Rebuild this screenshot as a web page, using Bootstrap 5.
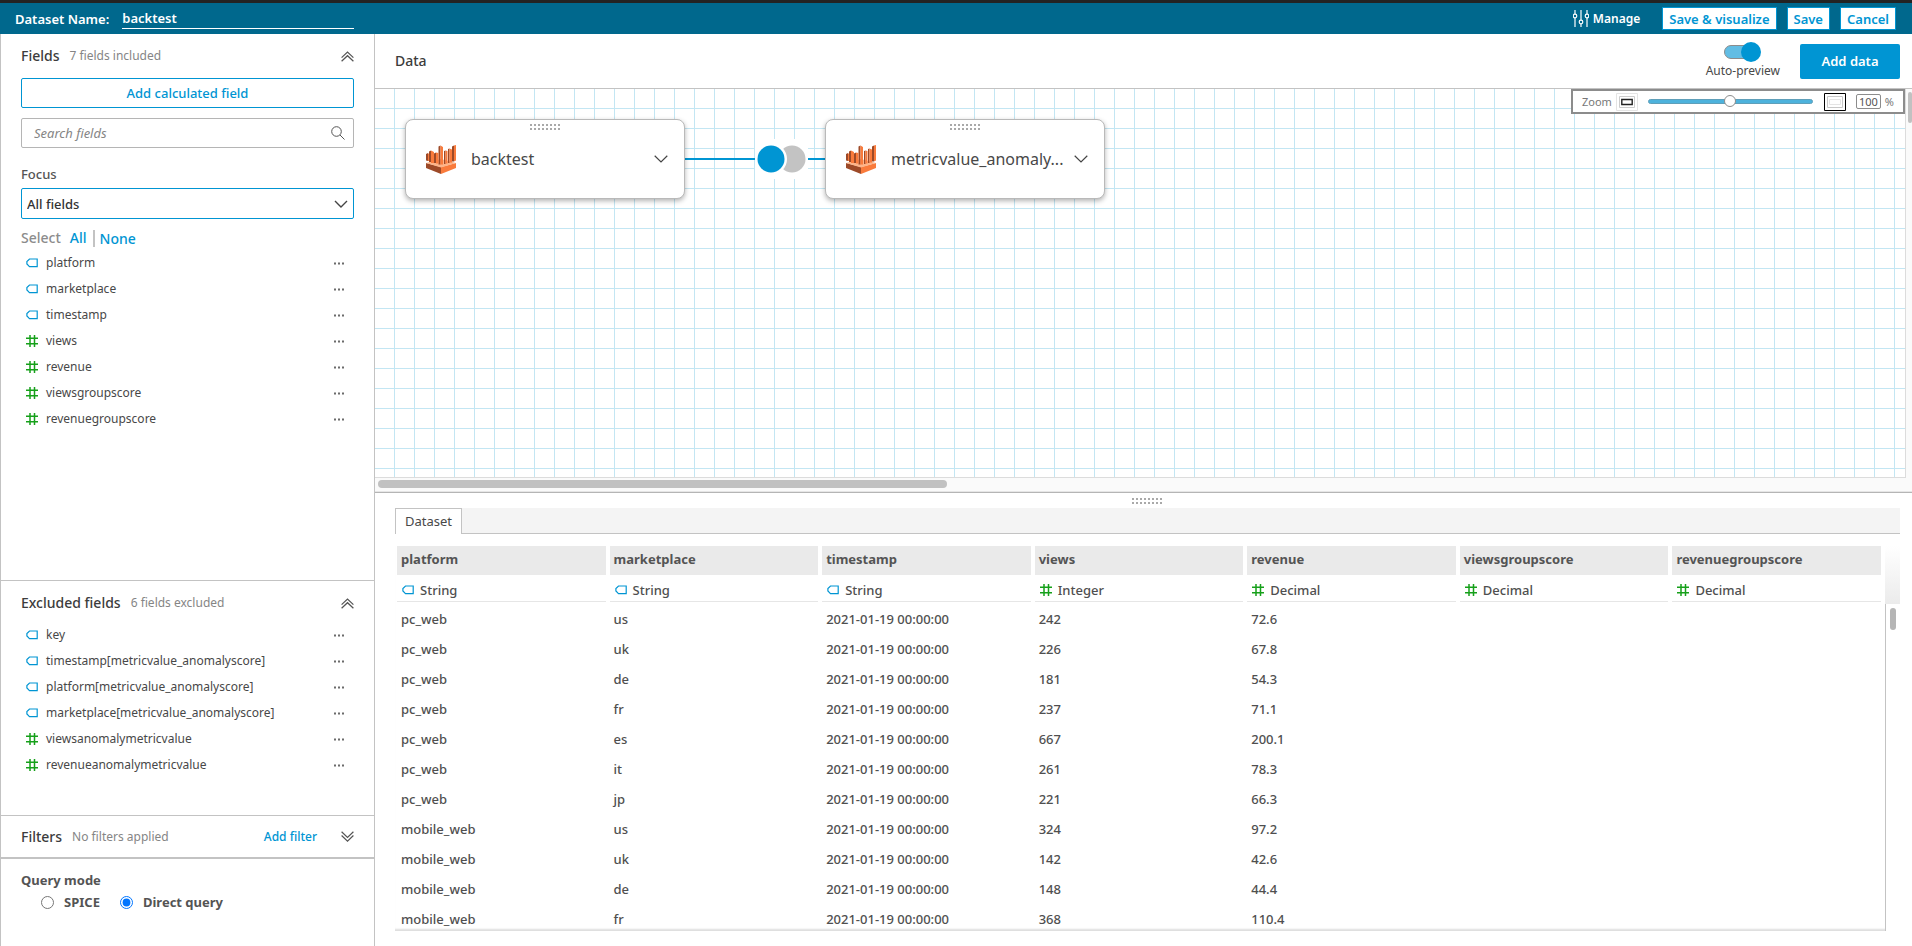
<!DOCTYPE html>
<html lang="en">
<head>
<meta charset="utf-8">
<meta name="viewport" content="width=device-width, initial-scale=1">
<title>Dataset: backtest</title>
<link href="https://cdn.jsdelivr.net/npm/bootstrap@5.3.0/dist/css/bootstrap.min.css" rel="stylesheet">
<style>
:root{--ink:#545454;--dark:#3c3c3c;--muted:#8c8c8c;--blue:#0095d3;--line:#c3c3c3}
body{font-family:"Noto Sans","Open Sans",sans-serif;font-size:13px;line-height:20px;color:var(--ink);font-weight:500}
button,input,select{font-family:inherit}
a{color:var(--blue);text-decoration:none}
svg{display:block;flex:none}
.plain{border:0;background:none;padding:0;color:inherit}
.topbar{background:#00688d;border-top:3px solid #232323;height:34px;color:#fff;font-weight:600;padding:0 16px 0 15px}
.name-input{width:232px;margin-left:13px;border:0;border-bottom:1px solid #fff;background:none;color:#fff;font-weight:600;line-height:20px;padding:0;outline:0}
.manage{font-size:12px;font-weight:600}
.btn-top{background:#fff;color:var(--blue);border:1px solid var(--blue);border-radius:0;font-size:13px;font-weight:600;line-height:20px;padding:0 6px;height:23px;margin-left:10px}
.btn-first{margin-left:22px}
.side{width:375px;border:solid var(--line);border-width:0 1px}
.pad{padding-left:20px;padding-right:20px}
.side-title{font-size:14px;color:var(--dark);font-weight:500;margin:0;line-height:20px}
.note{font-size:12px;font-weight:400;color:#858585;margin-left:10px}
.outline-btn{height:30px;border:1px solid var(--blue);border-radius:2px;color:var(--blue);font-size:13px;font-weight:500;padding:0;line-height:20px}
.search-box{height:30px;border:1px solid #b5b5b5;border-radius:2px;padding:0 8px 0 12px;margin:10px 0 16px}
.search-box input{border:0;outline:0;font-size:13px;padding:0;min-width:0}
.search-box input::placeholder{color:#858585;font-style:italic;opacity:1}
.focus-select{height:31px;border:1px solid var(--blue);border-radius:2px;color:#333;font-size:13px;font-weight:500;line-height:20px;padding:0 30px 0 5px;background-position:right 5px center;background-size:14px 14px;background-image:url("data:image/svg+xml,%3Csvg xmlns='http://www.w3.org/2000/svg' viewBox='0 0 14 14'%3E%3Cpath d='M1 4l6 6 6-6' fill='none' stroke='%23444' stroke-width='1.4'/%3E%3C/svg%3E")}
.select-row{font-size:14px;margin:9px 0 2px}
.select-row span{color:var(--muted);margin-right:9px}
.select-row a+a{border-left:2px solid var(--line);padding-left:5px;margin-left:6px;line-height:17px}
.field-list{list-style:none;margin:0;padding:0 10px 0 5px;font-size:12px;font-weight:400;color:#484848}
.field-list li{display:flex;align-items:center;height:26px}
.field-list svg{margin-right:8px}
.field-list button{margin-left:auto}
.field-list button svg{margin:0}
.rule{border-top:1px solid var(--line)}
.excluded{padding-bottom:37px}
.excluded .field-list{padding-top:1px}
.filters{height:42px}
.add-filter{font-size:12px}
.query{border-top:2px solid var(--line);height:89px;font-weight:700}
.query input{width:13px;height:13px;margin:0 10px 0 0}
.side-legend{font-size:13px;line-height:20px;font-weight:700;margin:3px 0 2px;padding:0}
.radios{padding-left:20px;font-size:13px}
.radios label{margin-right:20px}
.data-head{height:55px;border-bottom:1px solid var(--line);padding:0 12px 0 20px}
.preview{margin-right:20px;font-size:12px;font-weight:400;line-height:18px;color:#484848}
.switch-x{appearance:none;width:37px;height:20px;margin:0;position:relative}
.switch-x::before{content:"";position:absolute;left:0;top:3px;width:34px;height:14px;border:1px solid #8c8c8c;border-radius:7px;background:#62bde4}
.switch-x::after{content:"";position:absolute;right:0;top:0;width:20px;height:20px;border-radius:50%;background:var(--blue)}
.add-data{width:100px;height:35px;background:var(--blue);color:#fff;border:0;border-radius:2px;font-size:13px;font-weight:600;padding:0}
.flow-area{flex:403 1 0;min-height:0;border-bottom:1px solid #b5b5b5;background:#fafafa}
.flow-canvas{background:#fff linear-gradient(90deg,transparent 19px,#c3e6f3 19px) 0 0/20px 20px;position:relative;overflow:hidden;border:solid #dcdcdc;border-width:0 1px 1px 0}
.flow-canvas::before{content:"";position:absolute;inset:0;background:linear-gradient(transparent 19px,#c3e6f3 19px) 0 0/20px 20px}
.vbar{width:6px}
.hbar{height:14px;border-bottom:1px solid #e6e6e6}
.thumb{background:#c1c1c1;border-radius:6px}
.vbar .thumb{width:4px;height:31px;margin:3px 0 0 2px}
.hbar .thumb{width:37%;height:8px;margin-left:3px}
.node-box{position:absolute;top:30px;width:280px;height:80px;background:#fff;border:1px solid #b9b9b9;border-radius:8px;box-shadow:0 2px 5px rgba(0,0,0,.3);padding:0 16px 0 20px;font-size:16px;font-weight:400;color:#484848}
.node-box>span+svg+span{margin-left:15px}
.node-a{left:30px}
.node-b{left:450px}
.dots{width:31px;height:7px;background:linear-gradient(90deg,#a9a9a9 2px,transparent 2px) 0 0/4px 2px repeat-x,linear-gradient(90deg,#a9a9a9 2px,transparent 2px) 0 4px/4px 2px repeat-x}
.node-box .dots{position:absolute;left:124px;top:4px}
.join-link{position:absolute;left:310px;top:50px}
.zoom-box{position:absolute;top:0;right:0;width:334px;height:25px;border:2px solid #8c8c8c;background:#fff;padding:0 9px;font-size:11px;font-weight:400;color:#777}
.zoom-box label{margin-right:4px}
.zoom-box input[type=range]{appearance:none;width:168px;height:14px;margin:0 11px 0 10px;background:none;outline:0}
.zoom-box input[type=range]::-webkit-slider-runnable-track{height:5px;border:1px solid #5f9fb9;border-radius:3px;background:#4db2dc}
.zoom-box input[type=range]::-webkit-slider-thumb{appearance:none;width:12px;height:12px;margin-top:-5px;border:1px solid #8c8c8c;border-radius:50%;background:#fff}
.pct{width:25px;height:15px;border:1px solid #8c8c8c;border-radius:2px;padding:0;text-align:center;font-size:11px;color:#545454;margin:0 4px 0 10px}
.result{flex:434 1 0;min-height:0;padding:5px 12px 15px 20px}
.tab-strip{height:26px;background:#f4f4f4;border-bottom:1px solid var(--line);margin-top:3px}
.tab-strip button{height:26px;border:1px solid var(--line);border-bottom:0;background:#fff;padding:0 9px;color:#484848}
.grid-wrap{margin-top:12px;box-shadow:inset 0 -3px 2px -1px #dedede}
.grid-pane{padding-right:2px}
.data-grid{width:100%;table-layout:fixed;border-collapse:separate;border-spacing:0;color:#4f4f4f}
.data-grid th,.data-grid td{padding:0 4px;border:solid transparent;border-width:0 2px;height:30px;line-height:20px;background-clip:padding-box}
.data-grid th{height:29px;background-color:#eaeaea;color:#545454;font-weight:700;padding-bottom:2px}
.data-grid .types td{height:29px;padding:2px 4px 0 5px;background:linear-gradient(#e6e6e6,#e6e6e6) left 26px/100% 1px no-repeat padding-box}
.types span{display:flex;align-items:center;gap:6px}
.gutter{width:15px}
.gutter .fade-x{height:58px;background:linear-gradient(#fff,#ebebeb)}
.gutter .rail{border-left:1px solid var(--line)}
.gutter .thumb{width:6px;height:22px;margin:4px 0 0 4px;background:#b5b5b5}
</style>
</head>
<body class="vh-100 d-flex flex-column overflow-hidden bg-white">
<svg width="0" height="0" class="position-absolute" aria-hidden="true">
  <symbol id="tag" viewBox="0 0 12 10"><path d="M3.5 1H11.2V8.6H3.5L.9 6V3.6Z" fill="none" stroke="#0095d3" stroke-width="1.2"/></symbol>
  <symbol id="hash" viewBox="0 0 12 12"><path d="M4 0V12M8.5 0V12M0 3.3H12M0 8.7H12" fill="none" stroke="#16a01a" stroke-width="1.5"/></symbol>
  <symbol id="more" viewBox="0 0 10 3"><path d="M0 .5h2v2H0zM4 .5h2v2H4zM8 .5h2v2H8z" fill="#6b6b6b"/></symbol>
  <symbol id="up2" viewBox="0 0 13 11"><path d="M.6 6.6 6.5 1l5.9 5.6M.6 10.3 6.5 4.7l5.9 5.6" fill="none" stroke="#545454" stroke-width="1.2"/></symbol>
  <symbol id="down" viewBox="0 0 14 8"><path d="M.7.8 7 7 13.3.8" fill="none" stroke="#444" stroke-width="1.2"/></symbol>
  <symbol id="bars" viewBox="0 0 30 29">
    <path d="M0 18 15 22V29L0 23Z" fill="#9d4a28"/><path d="M15 22 30 18V23L15 29Z" fill="#f97b3c"/><path d="M0 18 15 14 30 18 15 22.500Z" fill="#fcb489"/>
    <path d="M0 9 2 8V16L0 15.500ZM3 6.500 5 5.500V17H3ZM8 8.500 10 7.500V18H8ZM12.500 1.500 14.500.5V19.500H12.500ZM18 6 19.500 5.500V19H18ZM22 4 23.500 3.500V18H22ZM26 1.500 28 .5V16.500H26Z" fill="#9d4a28"/>
    <path d="M2 8 3 9V16H2ZM5 5.500 8 7V18H5ZM10 7.500 12.500 8V18.500H10ZM14.500.5 17 2V19.500H14.500ZM19.500 5.500 21.500 6V18.500H19.500ZM23.500 3.500 26 4.500V17.500H23.500ZM28 .5 30 0V15.500L28 16.500Z" fill="#f97b3c"/>
  </symbol>
</svg>

<header class="topbar d-flex align-items-center flex-shrink-0">
  <label for="dsname">Dataset Name:</label>
  <input id="dsname" class="name-input" value="backtest">
  <button class="plain manage d-flex align-items-center ms-auto" type="button">
    <svg width="16" height="18" viewBox="0 0 16 18" class="me-1" fill="none" stroke="#fff" stroke-width="1.2"><path d="M2 0V4M2 8V17M8 0V10M8 14V17M14 0V4M14 8V17"/><circle cx="2" cy="6" r="1.800"/><circle cx="8" cy="12" r="1.800"/><circle cx="14" cy="6" r="1.800"/></svg>Manage</button>
  <button class="btn-top btn-first" type="button">Save &amp; visualize</button>
  <button class="btn-top" type="button">Save</button>
  <button class="btn-top" type="button">Cancel</button>
</header>

<div class="d-flex flex-grow-1 overflow-hidden">
  <aside class="side d-flex flex-column flex-shrink-0">
    <section class="pad flex-grow-1 overflow-hidden">
      <div class="d-flex align-items-center pt-2 mt-1 mb-2">
        <h2 class="side-title">Fields</h2><span class="note">7 fields included</span>
        <button class="plain ms-auto" type="button" aria-label="Collapse fields"><svg width="13" height="11"><use href="#up2"/></svg></button>
      </div>
      <button class="btn outline-btn w-100 mt-1" type="button">Add calculated field</button>
      <div class="search-box d-flex align-items-center">
        <input class="flex-grow-1" type="search" placeholder="Search fields" aria-label="Search fields">
        <svg width="14" height="14" viewBox="0 0 14 14" fill="none" stroke="#545454"><circle cx="5.500" cy="5.500" r="4.800"/><path d="M9 9l4.500 4.500"/></svg>
      </div>
      <label for="focus" class="d-block mb-1">Focus</label>
      <select id="focus" class="form-select focus-select"><option>All fields</option></select>
      <div class="select-row d-flex align-items-center"><span>Select</span><a href="#all">All</a><a href="#none">None</a></div>
      <ul class="field-list">
        <li><svg width="12" height="10"><use href="#tag"/></svg>platform<button class="plain" type="button" aria-label="Options"><svg width="10" height="3"><use href="#more"/></svg></button></li>
        <li><svg width="12" height="10"><use href="#tag"/></svg>marketplace<button class="plain" type="button" aria-label="Options"><svg width="10" height="3"><use href="#more"/></svg></button></li>
        <li><svg width="12" height="10"><use href="#tag"/></svg>timestamp<button class="plain" type="button" aria-label="Options"><svg width="10" height="3"><use href="#more"/></svg></button></li>
        <li><svg width="12" height="12"><use href="#hash"/></svg>views<button class="plain" type="button" aria-label="Options"><svg width="10" height="3"><use href="#more"/></svg></button></li>
        <li><svg width="12" height="12"><use href="#hash"/></svg>revenue<button class="plain" type="button" aria-label="Options"><svg width="10" height="3"><use href="#more"/></svg></button></li>
        <li><svg width="12" height="12"><use href="#hash"/></svg>viewsgroupscore<button class="plain" type="button" aria-label="Options"><svg width="10" height="3"><use href="#more"/></svg></button></li>
        <li><svg width="12" height="12"><use href="#hash"/></svg>revenuegroupscore<button class="plain" type="button" aria-label="Options"><svg width="10" height="3"><use href="#more"/></svg></button></li>
      </ul>
    </section>
    <section class="pad rule excluded">
      <div class="d-flex align-items-center pt-2 mt-1 mb-2">
        <h2 class="side-title">Excluded fields</h2><span class="note">6 fields excluded</span>
        <button class="plain ms-auto" type="button" aria-label="Collapse excluded fields"><svg width="13" height="11"><use href="#up2"/></svg></button>
      </div>
      <ul class="field-list">
        <li><svg width="12" height="10"><use href="#tag"/></svg>key<button class="plain" type="button" aria-label="Options"><svg width="10" height="3"><use href="#more"/></svg></button></li>
        <li><svg width="12" height="10"><use href="#tag"/></svg>timestamp[metricvalue_anomalyscore]<button class="plain" type="button" aria-label="Options"><svg width="10" height="3"><use href="#more"/></svg></button></li>
        <li><svg width="12" height="10"><use href="#tag"/></svg>platform[metricvalue_anomalyscore]<button class="plain" type="button" aria-label="Options"><svg width="10" height="3"><use href="#more"/></svg></button></li>
        <li><svg width="12" height="10"><use href="#tag"/></svg>marketplace[metricvalue_anomalyscore]<button class="plain" type="button" aria-label="Options"><svg width="10" height="3"><use href="#more"/></svg></button></li>
        <li><svg width="12" height="12"><use href="#hash"/></svg>viewsanomalymetricvalue<button class="plain" type="button" aria-label="Options"><svg width="10" height="3"><use href="#more"/></svg></button></li>
        <li><svg width="12" height="12"><use href="#hash"/></svg>revenueanomalymetricvalue<button class="plain" type="button" aria-label="Options"><svg width="10" height="3"><use href="#more"/></svg></button></li>
      </ul>
    </section>
    <section class="pad rule d-flex align-items-center filters">
      <h2 class="side-title">Filters</h2><span class="note">No filters applied</span>
      <a href="#filter" class="ms-auto add-filter">Add filter</a>
      <button class="plain ms-4" type="button" aria-label="Expand filters"><svg width="13" height="11" viewBox="0 0 13 11"><path d="M.6.8 6.500 6.400l5.900-5.600M.6 4.500l5.900 5.600 5.900-5.600" fill="none" stroke="#545454" stroke-width="1.200"/></svg></button>
    </section>
    <fieldset class="pad query pt-2">
      <legend class="side-legend">Query mode</legend>
      <div class="d-flex align-items-center radios">
        <input type="radio" name="mode" id="spice"><label for="spice">SPICE</label>
        <input type="radio" name="mode" id="direct" checked><label for="direct">Direct query</label>
      </div>
    </fieldset>
  </aside>

  <main class="d-flex flex-column flex-grow-1 overflow-hidden">
    <div class="data-head d-flex align-items-center flex-shrink-0">
      <h1 class="side-title">Data</h1>
      <div class="d-flex flex-column align-items-center ms-auto preview">
        <input class="switch-x" type="checkbox" role="switch" id="auto" checked><label for="auto">Auto-preview</label>
      </div>
      <button class="add-data" type="button">Add data</button>
    </div>
    <section class="flow-area d-flex flex-column">
      <div class="d-flex flex-grow-1 overflow-hidden">
        <div class="flow-canvas flex-grow-1">
          <svg class="join-link" width="140" height="40" viewBox="0 0 140 40">
            <path d="M70 0h53v40H70z" fill="#fff"/><path d="M0 20h70M123 20h17" stroke="#0095d3" stroke-width="2"/>
            <circle cx="107" cy="20" r="13.500" fill="#c3c3c3"/><circle cx="86" cy="20" r="16" fill="#fff"/><circle cx="86" cy="20" r="13.500" fill="#0095d3"/>
          </svg>
          <div class="node-box d-flex align-items-center node-a"><span class="dots"></span><svg width="30" height="29"><use href="#bars"/></svg><span>backtest</span><button class="plain ms-auto" type="button" aria-label="Open menu"><svg width="14" height="8"><use href="#down"/></svg></button></div>
          <div class="node-box d-flex align-items-center node-b"><span class="dots"></span><svg width="30" height="29"><use href="#bars"/></svg><span>metricvalue_anomaly...</span><button class="plain ms-auto" type="button" aria-label="Open menu"><svg width="14" height="8"><use href="#down"/></svg></button></div>
          <div class="zoom-box d-flex align-items-center">
            <label for="zoom">Zoom</label>
            <button class="plain" type="button" aria-label="Zoom out"><svg width="22" height="18" viewBox="0 0 22 18" fill="none"><path d="M.5.5h21v17H.5z" stroke="#e4e4e4"/><path d="M3.500 3.500h15v11h-15z" stroke="#ccc"/><path d="M5.800 6.500h10.400v5H5.800z" stroke="#222" stroke-width="1.400"/></svg></button>
            <input type="range" id="zoom" min="0" max="200" value="100">
            <button class="plain" type="button" aria-label="Fit to view"><svg width="22" height="18" viewBox="0 0 22 18" fill="none"><path d="M.5.5h21v17H.5z" stroke="#000"/><path d="M3.500 3.500h15v11h-15z" stroke="#c8c8c8"/><path d="M5.500 6.500h11v5h-11z" stroke="#e4e4e4"/></svg></button>
            <input class="pct" value="100" aria-label="Zoom percent"><span>%</span>
          </div>
        </div>
        <div class="vbar flex-shrink-0"><div class="thumb"></div></div>
      </div>
      <div class="hbar d-flex align-items-center flex-shrink-0"><div class="thumb"></div></div>
    </section>
    <section class="result d-flex flex-column">
      <div class="dots flex-shrink-0 mx-auto"></div>
      <div class="tab-strip flex-shrink-0"><button type="button">Dataset</button></div>
      <div class="d-flex flex-grow-1 overflow-hidden grid-wrap">
        <div class="grid-pane flex-grow-1 overflow-hidden">
          <table class="data-grid">
            <thead>
              <tr><th>platform</th><th>marketplace</th><th>timestamp</th><th>views</th><th>revenue</th><th>viewsgroupscore</th><th>revenuegroupscore</th></tr>
              <tr class="types">
                <td><span><svg width="12" height="10"><use href="#tag"/></svg>String</span></td>
                <td><span><svg width="12" height="10"><use href="#tag"/></svg>String</span></td>
                <td><span><svg width="12" height="10"><use href="#tag"/></svg>String</span></td>
                <td><span><svg width="12" height="12"><use href="#hash"/></svg>Integer</span></td>
                <td><span><svg width="12" height="12"><use href="#hash"/></svg>Decimal</span></td>
                <td><span><svg width="12" height="12"><use href="#hash"/></svg>Decimal</span></td>
                <td><span><svg width="12" height="12"><use href="#hash"/></svg>Decimal</span></td>
              </tr>
            </thead>
            <tbody>
              <tr><td>pc_web</td><td>us</td><td>2021-01-19 00:00:00</td><td>242</td><td>72.6</td><td></td><td></td></tr>
              <tr><td>pc_web</td><td>uk</td><td>2021-01-19 00:00:00</td><td>226</td><td>67.8</td><td></td><td></td></tr>
              <tr><td>pc_web</td><td>de</td><td>2021-01-19 00:00:00</td><td>181</td><td>54.3</td><td></td><td></td></tr>
              <tr><td>pc_web</td><td>fr</td><td>2021-01-19 00:00:00</td><td>237</td><td>71.1</td><td></td><td></td></tr>
              <tr><td>pc_web</td><td>es</td><td>2021-01-19 00:00:00</td><td>667</td><td>200.1</td><td></td><td></td></tr>
              <tr><td>pc_web</td><td>it</td><td>2021-01-19 00:00:00</td><td>261</td><td>78.3</td><td></td><td></td></tr>
              <tr><td>pc_web</td><td>jp</td><td>2021-01-19 00:00:00</td><td>221</td><td>66.3</td><td></td><td></td></tr>
              <tr><td>mobile_web</td><td>us</td><td>2021-01-19 00:00:00</td><td>324</td><td>97.2</td><td></td><td></td></tr>
              <tr><td>mobile_web</td><td>uk</td><td>2021-01-19 00:00:00</td><td>142</td><td>42.6</td><td></td><td></td></tr>
              <tr><td>mobile_web</td><td>de</td><td>2021-01-19 00:00:00</td><td>148</td><td>44.4</td><td></td><td></td></tr>
              <tr><td>mobile_web</td><td>fr</td><td>2021-01-19 00:00:00</td><td>368</td><td>110.4</td><td></td><td></td></tr>
            </tbody>
          </table>
        </div>
        <div class="gutter d-flex flex-column flex-shrink-0 bg-white"><div class="fade-x"></div><div class="rail flex-grow-1"><div class="thumb"></div></div></div>
      </div>
    </section>
  </main>
</div>
<script src="https://cdn.jsdelivr.net/npm/bootstrap@5.3.0/dist/js/bootstrap.bundle.min.js"></script>
</body>
</html>
